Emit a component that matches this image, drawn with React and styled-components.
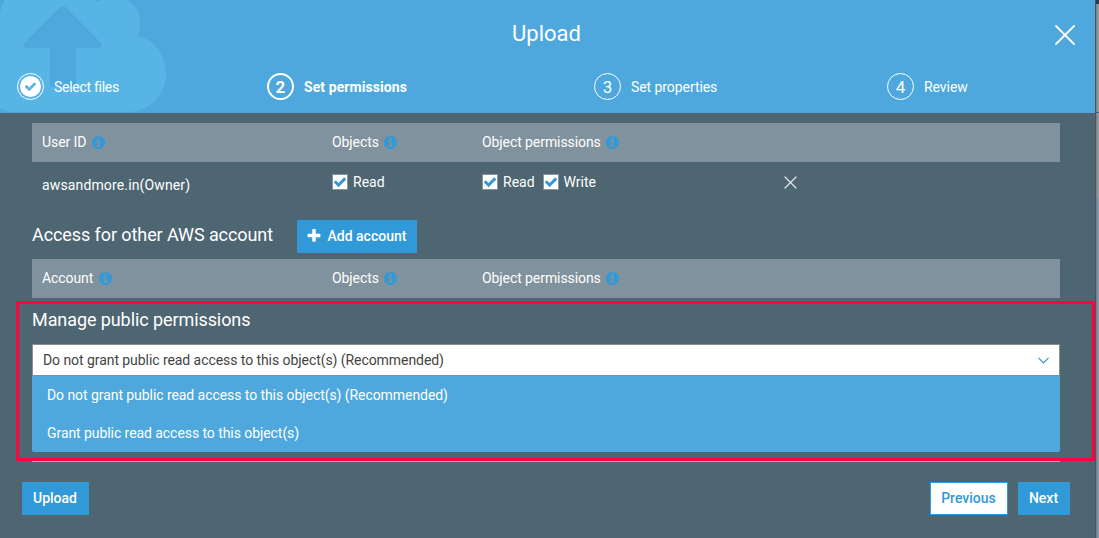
import React from "react";
import styled, { createGlobalStyle } from "styled-components";

const GlobalStyle = createGlobalStyle`
  * {
    box-sizing: border-box;
  }

  body {
    margin: 0;
    overflow: hidden;
    font-family: Roboto, "Liberation Sans", sans-serif;
    font-size: 14px;
    letter-spacing: -0.065px;
    color: #fff;
  }

  button {
    font: inherit;
    color: inherit;
    padding: 0;
    border: 0;
    background: none;
    cursor: pointer;
  }
`;

const steps = [
  { id: 1, label: "Select files", spacing: -0.28, done: true },
  { id: 2, label: "Set permissions", spacing: 0.08, active: true },
  { id: 3, label: "Set properties", spacing: -0.07 },
  { id: 4, label: "Review", spacing: -0.05 },
];

const options = [
  "Do not grant public read access to this object(s) (Recommended)",
  "Grant public read access to this object(s)",
];

const icons = {
  check:
    "M1671 566q0 40-28 68l-724 724-136 136q-28 28-68 28t-68-28l-136-136-362-362q-28-28-28-68t28-68l136-136q28-28 68-28t68 28l294 295 656-657q28-28 68-28t68 28l136 136q28 28 28 68z",
  plus: "M1600 736v192q0 40-28 68t-68 28h-416v416q0 40-28 68t-68 28h-192q-40 0-68-28t-28-68v-416h-416q-40 0-68-28t-28-68v-192q0-40 28-68t68-28h416v-416q0-40 28-68t68-28h192q40 0 68 28t28 68v416h416q40 0 68 28t28 68z",
  info: "M1152 1376v-160q0-14-9-23t-23-9h-96v-512q0-14-9-23t-23-9h-320q-14 0-23 9t-9 23v160q0 14 9 23t23 9h96v320h-96q-14 0-23 9t-9 23v160q0 14 9 23t23 9h448q14 0 23-9t9-23zM1024 480v-160q0-14-9-23t-23-9h-192q-14 0-23 9t-9 23v160q0 14 9 23t23 9h192q14 0 23-9t9-23zM1664 896q0 209-103 385.500t-279.500 279.500-385.500 103-385.500-103-279.500-279.500-103-385.500 103-385.500 279.500-279.500 385.500-103 385.500 103 279.500 279.500 103 385.500z",
};

const Screen = styled.div`
  display: flex;
  height: 538px;
  overflow: hidden;
`;

const Modal = styled.div`
  position: relative;
  display: flex;
  flex-direction: column;
  width: 1095px;
  background: #4e6572;
`;

// Dimmed sliver of the page behind the modal
const Backdrop = styled.div`
  flex: 1;
  display: flex;
  flex-direction: column;
  border-left: 1px solid #46545d;
  background: linear-gradient(to right, #6f7d88, #8698a7 70%);
`;

const BackdropBar = styled.div`
  height: 4px;
  background: #28394a;
`;

const BackdropPanel = styled.div`
  height: ${(props) => props.$height}px;
  background: linear-gradient(to right, #777b7e, #969a9d 70%);
  border-bottom: ${(props) => (props.$line ? "1px solid #4c5b66" : "0")};
`;

const Header = styled.header`
  position: relative;
  height: 113px;
  background: #4ea8dd;
`;

const Cloud = styled.svg`
  position: absolute;
  left: 0;
  top: 0;
`;

const TitleBar = styled.div`
  position: relative;
  display: grid;
  grid-template-columns: 1fr auto 1fr;
  align-items: center;
  height: 70px;
  padding: 0 20px 0 18px;
`;

const Title = styled.h1`
  grid-column: 2;
  margin: 0;
  padding-bottom: 3px;
  font-size: 22px;
  font-weight: 400;
  letter-spacing: 0;
`;

const CloseButton = styled.button`
  justify-self: end;
  display: flex;
`;

const Steps = styled.ol`
  position: relative;
  display: grid;
  grid-template-columns: 250px 327px 293px 1fr;
  margin: 0;
  padding: 3px 0 0 17px;
  list-style: none;
`;

const Step = styled.li`
  display: flex;
  align-items: center;
  gap: 10px;
  height: 27px;
  font-weight: ${(props) => (props.$active ? 700 : 400)};
  letter-spacing: ${(props) => props.$spacing}px;
`;

const StepCircle = styled.span`
  display: flex;
  align-items: center;
  justify-content: center;
  width: 27px;
  height: 27px;
  padding-top: ${(props) => (props.$done ? 0 : 1)}px;
  border: ${(props) => (props.$active ? 2 : 1)}px solid #fff;
  border-radius: 50%;
  font-size: 17px;
  letter-spacing: 0;
`;

const StepDone = styled.span`
  display: flex;
  align-items: center;
  justify-content: center;
  width: 21px;
  height: 21px;
  border-radius: 50%;
  background: #fff;
  color: #58b4e4;
`;

const Body = styled.main`
  display: flex;
  flex-direction: column;
  height: 349px;
  padding: 10px 35px 0 32px;
`;

const TableRow = styled.div`
  display: grid;
  grid-template-columns: 290px 150px 302px 1fr;
  height: 39px;
  padding-left: 10px;
`;

const TableHead = styled(TableRow)`
  align-items: center;
  padding-bottom: 1px;
  background: #80929d;
`;

const HeadCell = styled.div`
  display: flex;
  align-items: center;
  gap: 5.500px;

  svg {
    margin-top: 1px;
    color: #3199d7;
  }
`;

const HeadLabel = styled.span`
  letter-spacing: -0.08px;
`;

const OwnerRow = styled(TableRow)`
  height: 58px;
  padding-top: 12px;
`;

const Owner = styled.div`
  padding-top: 3px;
  letter-spacing: 0.14px;
`;

const Checks = styled.div`
  display: flex;
  align-items: flex-start;
  gap: 8px;
`;

const CheckLabel = styled.label`
  display: flex;
  align-items: center;
  gap: 5px;
  line-height: 16px;
  letter-spacing: 0;
`;

const CheckBox = styled.span`
  display: flex;
  align-items: center;
  justify-content: center;
  width: 16px;
  height: 16px;
  border: 1px solid #8a959b;
  background: #fff;
  color: #3199d7;
`;

const RemoveButton = styled.button`
  display: flex;
  align-self: start;
  width: 13px;
  padding-top: 2px;
  opacity: 0.85;
`;

const SectionHead = styled.div`
  display: flex;
  align-items: center;
  gap: 24px;
  height: 33px;
  margin-bottom: 6px;
`;

const SectionTitle = styled.h2`
  margin: 0;
  padding-bottom: ${(props) => (props.$raised ? 3 : 0)}px;
  font-size: 18px;
  font-weight: 400;
  line-height: 24px;
  letter-spacing: -0.085px;
`;

const Button = styled.button`
  height: 33px;
  min-width: ${(props) => props.$width}px;
  display: inline-flex;
  align-items: center;
  justify-content: center;
  gap: 7px;
  padding: 0 1px 1px 0;
  border: 1px solid #3199d7;
  background: ${(props) => (props.$outline ? "#fff" : "#3199d7")};
  color: ${(props) => (props.$outline ? "#3199d7" : "#fff")};
  font-weight: 500;
  letter-spacing: 0;
`;

const PublicSection = styled.section`
  flex: 1;
  padding-top: 10px;
  border-bottom: 1px solid #b4b0bc;
`;

const Select = styled.div`
  position: relative;
  margin-top: 12px;
`;

const SelectValue = styled.div`
  display: flex;
  align-items: center;
  justify-content: space-between;
  height: 32px;
  padding: 0 10px;
  border: 1px solid #8b8f91;
  background: #fff;
  color: #444;
`;

const Menu = styled.ul`
  position: absolute;
  top: 32px;
  left: 0;
  right: 0;
  margin: 0;
  padding: 0;
  list-style: none;
  background: #4ea8dd;
  border-radius: 0 0 2px 2px;
`;

const MenuItem = styled.li`
  height: 38px;
  padding-left: 15px;
  line-height: 38px;
`;

const Highlight = styled.div`
  position: absolute;
  left: 16px;
  top: 301px;
  width: 1079px;
  height: 160px;
  border: 3px solid #fb043f;
  border-radius: 2px;
  box-shadow: inset 0 0 1px #fb043f;
  pointer-events: none;
`;

const Footer = styled.footer`
  display: flex;
  gap: 10px;
  padding: 20px 25px 0 22px;
`;

const Spacer = styled.div`
  flex: 1;
`;

const CloudArt = () => (
  <Cloud width="170" height="113" viewBox="0 0 170 113">
    <path
      fill="#58b4e4"
      d="M5 0H96L98 2L102 0H128C137 6 140 15 140 23C140 29 139 33 137 36C153 39 166 54 166 74C166 95 149 112 128 112H17C10 112 4 111 0 108V12C1 8 3 3 5 0Z"
    />
    <path
      fill="#4ea8dd"
      d="M60.500 7Q63 5 65.500 7L100.500 42.500C102.500 45 101 48 98 48H76V83Q76 87 72 87H54Q50 87 50 83V48H27C24 48 23 45 25 42.500Z"
    />
  </Cloud>
);

// The glyphs sit on a 1792 grid with a 128 margin
const Icon = ({ name, size }) => (
  <svg width={size} height={size} viewBox="128 128 1536 1536">
    <path fill="currentColor" d={icons[name]} />
  </svg>
);

const Cross = ({ size, stroke }) => (
  <svg width={size} height={size} viewBox={`0 0 ${size} ${size}`}>
    <path
      d={`M1 1L${size - 1} ${size - 1}M${size - 1} 1L1 ${size - 1}`}
      stroke="#fff"
      strokeWidth={stroke}
      strokeLinecap="round"
    />
  </svg>
);

const Check = ({ label }) => (
  <CheckLabel>
    <CheckBox>
      <Icon name="check" size={12} />
    </CheckBox>
    {label}
  </CheckLabel>
);

const PermissionHead = ({ first }) => (
  <TableHead>
    {[first, "Objects", "Object permissions"].map((label) => (
      <HeadCell key={label}>
        <HeadLabel>{label}</HeadLabel>
        <Icon name="info" size={13} />
      </HeadCell>
    ))}
  </TableHead>
);

const App = () => {
  return (
    <Screen>
      <GlobalStyle />
      <Modal>
        <Header>
          <CloudArt />
          <TitleBar>
            <Title>Upload</Title>
            <CloseButton aria-label="Close">
              <Cross size={20} stroke={1.8} />
            </CloseButton>
          </TitleBar>
          <Steps>
            {steps.map((step) => (
              <Step
                key={step.id}
                $active={step.active}
                $spacing={step.spacing}
              >
                <StepCircle $active={step.active} $done={step.done}>
                  {step.done ? (
                    <StepDone>
                      <Icon name="check" size={11} />
                    </StepDone>
                  ) : (
                    step.id
                  )}
                </StepCircle>
                {step.label}
              </Step>
            ))}
          </Steps>
        </Header>

        <Body>
          <PermissionHead first="User ID" />
          <OwnerRow>
            <Owner>awsandmore.in(Owner)</Owner>
            <Checks>
              <Check label="Read" />
            </Checks>
            <Checks>
              <Check label="Read" />
              <Check label="Write" />
            </Checks>
            <RemoveButton aria-label="Remove">
              <Cross size={13} stroke={1.2} />
            </RemoveButton>
          </OwnerRow>

          <SectionHead>
            <SectionTitle $raised>Access for other AWS account</SectionTitle>
            <Button $width={120}>
              <Icon name="plus" size={14} />
              Add account
            </Button>
          </SectionHead>
          <PermissionHead first="Account" />

          <PublicSection>
            <SectionTitle>Manage public permissions</SectionTitle>
            <Select>
              <SelectValue>
                {options[0]}
                <svg width="11" height="7" viewBox="0 0 11 7">
                  <path
                    d="M0.500 0.800L5.500 5.800L10.500 0.800"
                    fill="none"
                    stroke="#3199d7"
                    strokeWidth="1.200"
                  />
                </svg>
              </SelectValue>
              <Menu>
                {options.map((option) => (
                  <MenuItem key={option}>{option}</MenuItem>
                ))}
              </Menu>
            </Select>
          </PublicSection>
        </Body>

        <Footer>
          <Button $width={67}>Upload</Button>
          <Spacer />
          <Button $width={78} $outline>
            Previous
          </Button>
          <Button $width={52}>Next</Button>
        </Footer>
        <Highlight />
      </Modal>
      <Backdrop>
        <BackdropBar />
        <BackdropPanel $height={109} $line />
        <BackdropPanel $height={86} />
      </Backdrop>
    </Screen>
  );
};

export default App;
